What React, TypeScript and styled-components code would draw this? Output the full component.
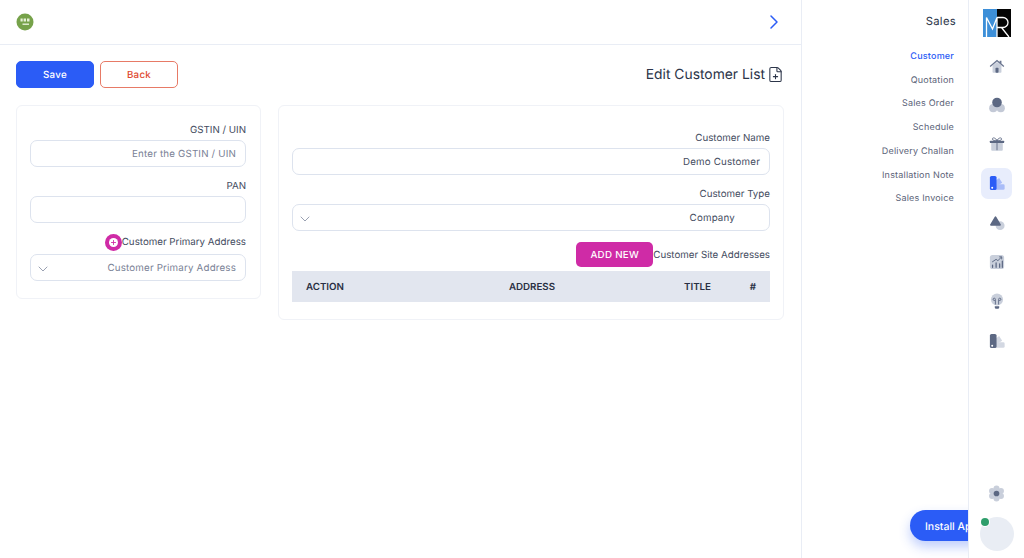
import React from "react";
import styled, { createGlobalStyle } from "styled-components";
import { ChevronDown, ChevronRight, FilePlus, Plus } from "lucide-react";

const GlobalStyle = createGlobalStyle`
  html, body { margin: 0; padding: 0; background: #fff; }
  body {
    font-family: Inter, "Liberation Sans", sans-serif;
    overflow: hidden;
    text-rendering: geometricPrecision;
  }
  * { box-sizing: border-box; }
`;

const Page = styled.div`
  position: relative;
  display: flex;
  width: 1024px;
  height: 558px;
  overflow: hidden;
`;
const Main = styled.main`
  width: 802px;
  border-right: 1px solid #e9edf5;
  display: flex;
  flex-direction: column;
`;
const TopBar = styled.header`
  height: 45px;
  border-bottom: 1px solid #e9edf5;
  padding: 0 15px 1px 16px;
  display: flex;
  align-items: center;
  justify-content: space-between;
  color: #2b5cf6;
`;
const Logo = styled.svg`
  width: 18px;
  height: 18px;
  display: block;
`;
const Content = styled.div`
  padding: 16px 17px 0 16px;
`;
const ActionRow = styled.div`
  display: flex;
  align-items: center;
  gap: 6px;
  height: 27px;
`;
const ActionButton = styled.button<{ $outline?: boolean }>`
  width: 78px;
  height: 27px;
  padding: 2px 0 0;
  border-radius: 5px;
  font: 500 9.75px Inter, sans-serif;
  letter-spacing: 0.3px;
  text-rendering: geometricPrecision;
  cursor: pointer;
  background: ${(p) => (p.$outline ? "#fff" : "#2b5cf6")};
  color: ${(p) => (p.$outline ? "#e0492f" : "#fff")};
  border: 1px solid ${(p) => (p.$outline ? "#e77a66" : "#2b5cf6")};
`;
const PageTitle = styled.h1`
  margin: 0 0 0 auto;
  display: flex;
  align-items: center;
  gap: 2px;
  font-size: 13.85px;
  font-weight: 400;
  color: #2c3549;
`;
const Columns = styled.div`
  display: flex;
  align-items: flex-start;
  gap: 17px;
  margin-top: 17px;
`;
const Card = styled.section<{ $wide?: boolean }>`
  width: ${(p) => (p.$wide ? "506px" : "245px")};
  height: ${(p) => (p.$wide ? "215px" : "194px")};
  border: 1px solid #f0f2f7;
  border-radius: 6px;
  padding: ${(p) => (p.$wide ? "24px 13px 0" : "16px 14px 0 13px")};
`;
const FieldLabel = styled.label<{ $withIcon?: boolean }>`
  display: flex;
  justify-content: flex-end;
  align-items: center;
  height: ${(p) => (p.$withIcon ? "17px" : "14px")};
  padding-top: ${(p) => (p.$withIcon ? "0" : "2px")};
  margin-bottom: ${(p) => (p.$withIcon ? "3px" : "4px")};
  font-size: 9.75px;
  color: #454d61;
`;
const InputBox = styled.div<{ $muted?: boolean }>`
  height: 27px;
  margin-bottom: 11px;
  padding: 2px 9px 0 4px;
  display: flex;
  align-items: center;
  justify-content: flex-end;
  border: 1px solid #dde3ee;
  border-radius: 7px;
  font-size: 9.75px;
  letter-spacing: 0.18px;
  color: ${(p) => (p.$muted ? "#7a8296" : "#454d61")};
`;
const SelectValue = styled.span<{ $inset?: boolean }>`
  margin-left: auto;
  margin-right: ${(p) => (p.$inset ? "25px" : "0")};
`;
const AddCircle = styled.span`
  width: 17px;
  height: 17px;
  border-radius: 50%;
  background: #cf2ba6;
  display: flex;
  align-items: center;
  justify-content: center;
  position: relative;
  &::before {
    content: "";
    position: absolute;
    inset: 4px;
    border-radius: 50%;
    background: #fff;
  }
  svg {
    position: relative;
    color: #cf2ba6;
  }
`;
const SiteRow = styled.div`
  display: flex;
  justify-content: flex-end;
  align-items: center;
  height: 25px;
  margin-bottom: 4px;
  font-size: 9.75px;
  color: #454d61;
`;
const SiteLabel = styled.span`
  padding-top: 2px;
`;
const AddNewButton = styled.button`
  width: 77px;
  height: 25px;
  padding: 2px 0 0;
  border: 0;
  border-radius: 5px;
  background: #cf2ba6;
  color: #fff;
  font: 500 9.75px Inter, sans-serif;
  letter-spacing: 0.3px;
  text-rendering: geometricPrecision;
`;
const HeadRow = styled.div`
  height: 31px;
  padding: 2px 14px 0;
  background: #e2e6ef;
  display: grid;
  grid-template-columns: 100px 149px 156px 1fr;
  align-items: center;
  font-size: 9.75px;
  font-weight: 600;
  color: #2a3044;
`;
const HeadCell = styled.span<{ $align?: string }>`
  text-align: ${(p) => p.$align ?? "right"};
`;
const SubNav = styled.nav`
  width: 166px;
  padding: 13px 14px 0 0;
  display: flex;
  flex-direction: column;
  align-items: flex-end;
`;
const SubNavTitle = styled.div`
  height: 16px;
  margin: 0 -2px 14.6px 0;
  font-size: 11.25px;
  letter-spacing: 0.3px;
  color: #2c3549;
  line-height: 16px;
`;
const SubNavItem = styled.a<{ $active?: boolean }>`
  height: 23.75px;
  padding-top: 2px;
  display: flex;
  align-items: center;
  font-size: 9px;
  letter-spacing: 0.2px;
  font-weight: ${(p) => (p.$active ? 500 : 400)};
  color: ${(p) => (p.$active ? "#2b5cf6" : "#5b6378")};
`;
const Rail = styled.aside`
  position: relative;
  z-index: 2;
  width: 56px;
  background: #fff;
  border-left: 1px solid #e9edf5;
  display: flex;
  flex-direction: column;
  align-items: center;
  padding: 9px 0 7px;
`;
const BrandMark = styled.svg`
  width: 28px;
  height: 28px;
  flex: none;
  display: block;
  margin-bottom: 13px;
`;
const RailButton = styled.div<{ $active?: boolean }>`
  width: 31px;
  height: 31px;
  flex: none;
  margin-bottom: 8.3px;
  border-radius: 7px;
  display: flex;
  align-items: center;
  justify-content: center;
  background: ${(p) => (p.$active ? "#e8edfc" : "transparent")};
`;
const RailIcon = styled.svg<{ $size?: number }>`
  width: ${(p) => p.$size ?? 16}px;
  height: ${(p) => p.$size ?? 16}px;
  display: block;
`;
const RailSpacer = styled.div`
  flex: 1;
`;
const Avatar = styled.div`
  position: relative;
  width: 34px;
  height: 34px;
  flex: none;
  border-radius: 50%;
  background: #e9edf4;
  &::after {
    content: "";
    position: absolute;
    left: 1px;
    top: 1px;
    width: 8px;
    height: 8px;
    border-radius: 50%;
    background: #2f9e6b;
    box-shadow: 0 0 0 1px #fff;
  }
`;
const InstallPill = styled.button`
  position: absolute;
  left: 910px;
  top: 510px;
  width: 100px;
  height: 31px;
  padding: 2px 0 0 15px;
  border: 0;
  border-radius: 16px;
  background: #2b5cf6;
  color: #fff;
  text-align: left;
  white-space: nowrap;
  font: 500 10.5px Inter, sans-serif;
  text-rendering: geometricPrecision;
  box-shadow: 0 6px 12px rgba(43, 92, 246, 0.3);
`;

const subNavItems = ["Customer", "Quotation", "Sales Order", "Schedule", "Delivery Challan", "Installation Note", "Sales Invoice"];

const Swatch = ({ main, soft }: { main: string; soft: string }) => (
  <RailIcon viewBox="0 0 18 18">
    <path d="M8 6l3.4-2.6 3.4 5.4L8 13z" fill={soft} />
    <path d="M8 10.5h8a1.6 1.6 0 0 1 1.6 1.6v3a1.6 1.6 0 0 1-1.6 1.6H7z" fill={soft} />
    <rect x="1" y="1" width="7.5" height="16" rx="1.8" fill={main} />
    <circle cx="3.6" cy="14.4" r="1.1" fill="#fff" />
  </RailIcon>
);

const railIcons = [
  <RailIcon viewBox="0 0 18 18" key="home">
    <path d="M4 8.5 9 4.5l5 4v7.2a.8.8 0 0 1-.8.8H4.8a.8.8 0 0 1-.8-.8z" fill="#c9cfdb" />
    <path d="M.8 9 9 2l3 2.5V3h2v3.2L17.2 9l-.9 1L9 3.9 1.7 10z" fill="#6b7690" />
    <rect x="7.3" y="11" width="3.4" height="5.5" rx=".8" fill="#5c6883" />
  </RailIcon>,
  <RailIcon viewBox="0 0 18 18" key="circles">
    <circle cx="4.8" cy="12.6" r="4.6" fill="#c3c9d6" />
    <circle cx="13.2" cy="12.6" r="4.6" fill="#c3c9d6" />
    <circle cx="9" cy="6.2" r="5.4" fill="#5c6883" />
  </RailIcon>,
  <RailIcon viewBox="0 0 18 18" key="gift">
    <rect x="2.5" y="7" width="13" height="9.5" rx="1" fill="#c9cfdb" />
    <rect x="1" y="5.4" width="16" height="2.6" rx=".6" fill="#5c6883" />
    <path d="M9 5.4V16M9 5C7 1.5 3.6 1.4 3.8 3.6 4 5.2 7 5.2 9 5zm0 0c2-3.5 5.4-3.6 5.2-1.4C14 5.2 11 5.2 9 5z" fill="none" stroke="#5c6883" strokeWidth="1" />
  </RailIcon>,
  <Swatch main="#2b5cf6" soft="#a9bcf8" key="sales" />,
  <RailIcon viewBox="0 0 18 18" key="triangle">
    <circle cx="12.5" cy="12" r="5" fill="#c9cfdb" />
    <path d="M6.3 2.2a1.2 1.2 0 0 1 2 0l5 8.4a1 1 0 0 1-.9 1.5H2.2a1 1 0 0 1-.9-1.5z" fill="#5c6883" />
  </RailIcon>,
  <RailIcon viewBox="0 0 18 18" key="chart">
    <rect x="1" y="1" width="16" height="16" rx="3" fill="#c9cfdb" />
    <path d="M3.5 9 8 6l2 1.5L14 3.5M11.5 3.2H14.3V6" fill="none" stroke="#5c6883" strokeWidth="1.1" />
    <path d="M4 15v-2.5M8 15v-5M12 15v-4M15 15V8" stroke="#5c6883" strokeWidth="1.4" strokeLinecap="round" />
  </RailIcon>,
  <RailIcon viewBox="0 0 18 18" key="bulb">
    <circle cx="9" cy="7.4" r="6.8" fill="#c9cfdb" />
    <path d="M6.5 15h5v1.2a1.6 1.6 0 0 1-1.6 1.6H8.1a1.6 1.6 0 0 1-1.6-1.6z" fill="#5c6883" />
    <path d="M7.2 13V8.4M10.8 13V8.4M7.2 8.4H5.8a1.3 1.3 0 1 1 1.4-1.3zm3.6 0h1.4a1.3 1.3 0 1 0-1.4-1.3z" fill="none" stroke="#5c6883" strokeWidth="1" />
  </RailIcon>,
  <Swatch main="#5c6883" soft="#d3d8e2" key="misc" />,
];

export default function App() {
  return (
    <Page>
      <GlobalStyle />
      <Main>
        <TopBar>
          <Logo viewBox="0 0 18 18">
            <circle cx="9" cy="9" r="8.5" fill="#76a24a" />
            <path d="M4.5 5.5h2.2v3H4.5zM7.6 5.5h2.4v3H7.6zM11 5.5h2.5v3H11z" fill="#e6f0d8" />
            <rect x="6.5" y="10.5" width="6.5" height="1.4" fill="#e6f0d8" />
          </Logo>
          <ChevronRight size={24} strokeWidth={1.5} />
        </TopBar>
        <Content>
          <ActionRow>
            <ActionButton>Save</ActionButton>
            <ActionButton $outline>Back</ActionButton>
            <PageTitle>
              Edit Customer List
              <FilePlus size={17} strokeWidth={1.5} />
            </PageTitle>
          </ActionRow>
          <Columns>
            <Card>
              <FieldLabel>GSTIN / UIN</FieldLabel>
              <InputBox $muted>Enter the GSTIN / UIN</InputBox>
              <FieldLabel>PAN</FieldLabel>
              <InputBox />
              <FieldLabel $withIcon>
                <AddCircle>
                  <Plus size={7} strokeWidth={3} />
                </AddCircle>
                Customer Primary Address
              </FieldLabel>
              <InputBox $muted>
                <ChevronDown size={16} strokeWidth={1.3} color="#8a92a6" />
                <SelectValue>Customer Primary Address</SelectValue>
              </InputBox>
            </Card>
            <Card $wide>
              <FieldLabel>Customer Name</FieldLabel>
              <InputBox>Demo Customer</InputBox>
              <FieldLabel>Customer Type</FieldLabel>
              <InputBox>
                <ChevronDown size={16} strokeWidth={1.3} color="#8a92a6" />
                <SelectValue $inset>Company</SelectValue>
              </InputBox>
              <SiteRow>
                <AddNewButton>ADD NEW</AddNewButton>
                <SiteLabel>Customer Site Addresses</SiteLabel>
              </SiteRow>
              <HeadRow>
                <HeadCell $align="left">ACTION</HeadCell>
                <HeadCell>ADDRESS</HeadCell>
                <HeadCell>TITLE</HeadCell>
                <HeadCell>#</HeadCell>
              </HeadRow>
            </Card>
          </Columns>
        </Content>
      </Main>
      <SubNav>
        <SubNavTitle>Sales</SubNavTitle>
        {subNavItems.map((item, i) => (
          <SubNavItem key={item} $active={i === 0}>
            {item}
          </SubNavItem>
        ))}
      </SubNav>
      <InstallPill>Install App</InstallPill>
      <Rail>
        <BrandMark viewBox="0 0 28 28">
          <rect width="14" height="28" fill="#3d8fd8" />
          <rect x="14" width="14" height="28" fill="#050505" />
          <path d="M3.5 28V8.5L9.5 20 14 8.5V28M14 8.5h6a5 5 0 0 1 0 10h-6M18.5 18.5 26 28" fill="none" stroke="#fff" strokeWidth="1.3" />
        </BrandMark>
        {railIcons.map((icon, i) => (
          <RailButton key={i} $active={i === 3}>
            {icon}
          </RailButton>
        ))}
        <RailSpacer />
        <RailButton>
          <RailIcon viewBox="0 0 18 18" $size={17}>
            <g fill="#c9cfdb">
              <circle cx="9" cy="3.6" r="3.2" />
              <circle cx="9" cy="14.4" r="3.2" />
              <circle cx="4.3" cy="6.3" r="3.2" />
              <circle cx="13.7" cy="6.3" r="3.2" />
              <circle cx="4.3" cy="11.7" r="3.2" />
              <circle cx="13.7" cy="11.7" r="3.2" />
              <circle cx="9" cy="9" r="5" />
            </g>
            <circle cx="9" cy="9" r="3" fill="#5c6883" />
          </RailIcon>
        </RailButton>
        <Avatar />
      </Rail>
    </Page>
  );
}
